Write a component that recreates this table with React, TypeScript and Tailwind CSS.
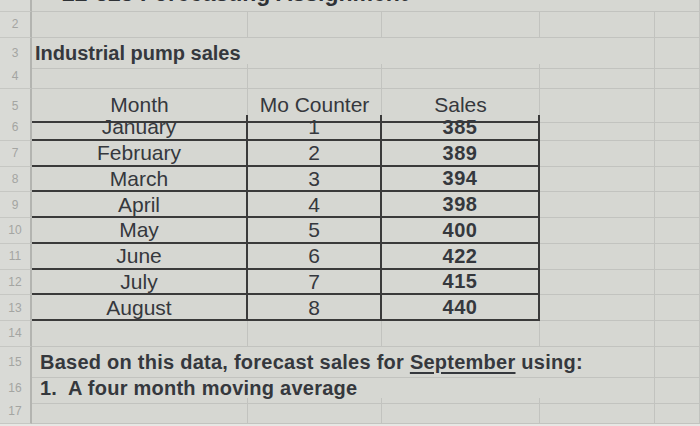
import React from "react";

const GRID = "grid grid-cols-[32px_216px_134px_158px_115px_1fr]";
const FAINT = "border-r border-b border-[#c2c3bf]";
const HEAD = "border-r border-[#c2c3bf] border-b-2 border-b-[#3a3a3a]";
const TCELL = "border-r-2 border-b-2 border-[#3a3a3a]";

function RowNum({ n }: { n: number }) {
  return (
    <div className="flex items-center justify-center border-r-2 border-b border-r-[#b3b4b0] border-b-[#c6c7c3] bg-[#d9dad6] text-[12px] text-[#a4a5a2]">
      {n}
    </div>
  );
}

function EmptyRow({ n }: { n: number }) {
  return (
    <div className={`${GRID} h-[25.75px]`}>
      <RowNum n={n} />
      <div className={FAINT} />
      <div className={FAINT} />
      <div className={FAINT} />
      <div className={FAINT} />
      <div className={FAINT} />
    </div>
  );
}

const data = [
  ["January", "1", "385"],
  ["February", "2", "389"],
  ["March", "3", "394"],
  ["April", "4", "398"],
  ["May", "5", "400"],
  ["June", "6", "422"],
  ["July", "7", "415"],
  ["August", "8", "440"],
];

export default function App() {
  return (
    <div
      className="w-[700px] h-[426px] overflow-hidden bg-[#d6d7d2] text-[#35383d]"
      style={{ fontFamily: '"Liberation Sans", Arial, sans-serif' }}
    >
      {/* Row 1 (cut off) */}
      <div className={`${GRID} h-[12px] overflow-hidden`}>
        <div className="border-r-2 border-b border-r-[#b3b4b0] border-b-[#c6c7c3] bg-[#d9dad6]" />
        <div className="col-span-4 border-b border-[#c2c3bf] pl-[30px] overflow-visible whitespace-nowrap">
          <div className="mt-[-18px] text-[23px] leading-none font-bold text-[#2f3236]">
            22-325 Forecasting Assignment
          </div>
        </div>
        <div className={FAINT} />
      </div>

      <EmptyRow n={2} />

      {/* Row 3 */}
      <div className={`${GRID} h-[25.75px]`}>
        <RowNum n={3} />
        <div className="col-span-4 flex items-center border-b border-r border-[#c2c3bf] pl-[3px] whitespace-nowrap text-[20px] font-bold">
          Industrial pump sales
        </div>
        <div className={FAINT} />
      </div>

      <EmptyRow n={4} />

      {/* Row 5 header */}
      <div className={`${GRID} h-[25.75px]`}>
        <RowNum n={5} />
        <div className={`${HEAD} flex items-center justify-center text-[21px]`}>Month</div>
        <div className={`${HEAD} flex items-center justify-center text-[21px]`}>Mo Counter</div>
        <div className={`${HEAD} flex items-center justify-center text-[21px]`}>Sales</div>
        <div className={FAINT} />
        <div className={FAINT} />
      </div>

      {data.map(([m, c, s], i) => (
        <div key={m} className={`${GRID} h-[25.75px]`}>
          <RowNum n={6 + i} />
          <div className={`${TCELL} flex items-center justify-center text-[21px] leading-none`}>{m}</div>
          <div className={`${TCELL} flex items-center justify-center text-[21px] leading-none`}>{c}</div>
          <div className={`${TCELL} flex items-center justify-center text-[20px] font-bold tracking-[0.5px] leading-none`}>{s}</div>
          <div className={FAINT} />
          <div className={FAINT} />
        </div>
      ))}

      <EmptyRow n={14} />

      {/* Row 15 */}
      <div className={`${GRID} h-[25.75px]`}>
        <RowNum n={15} />
        <div className="col-span-4 flex items-center border-b border-r border-[#c2c3bf] pl-[8px] whitespace-nowrap text-[20px] font-bold tracking-[0.25px]">
          <span>
            Based on this data, forecast sales for{" "}
            <span className="underline underline-offset-[3px] decoration-2">September</span> using:
          </span>
        </div>
        <div className={FAINT} />
      </div>

      {/* Row 16 */}
      <div className={`${GRID} h-[25.75px]`}>
        <RowNum n={16} />
        <div className="col-span-4 flex items-center border-b border-r border-[#c2c3bf] pl-[8px] whitespace-pre text-[20px] font-bold tracking-[0.25px]">
          1.  A four month moving average
        </div>
        <div className={FAINT} />
      </div>

      <EmptyRow n={17} />
      <div className="h-[6px] bg-[#e6e7e4]" />
    </div>
  );
}
